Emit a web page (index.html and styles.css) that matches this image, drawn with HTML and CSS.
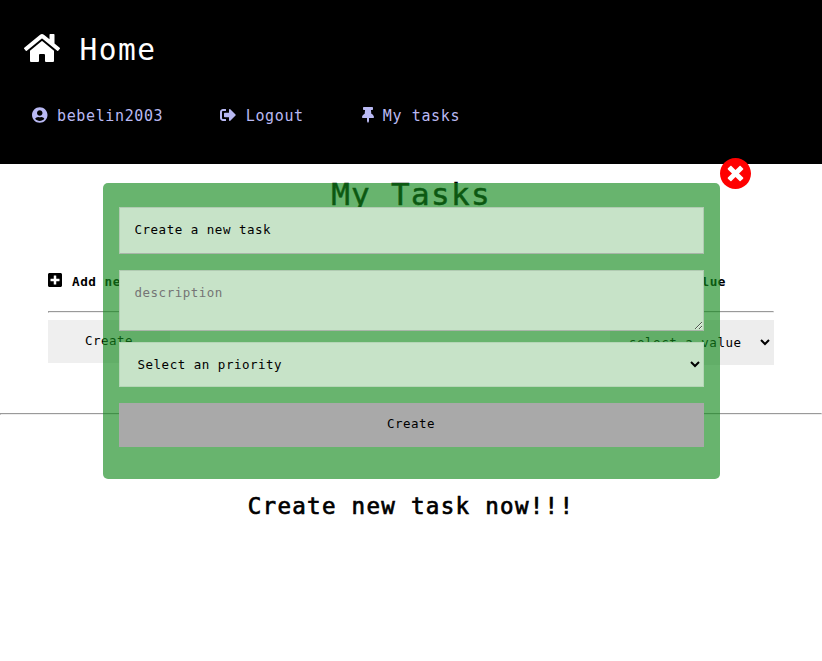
FILE: index.html
```html
<!DOCTYPE html>
<html lang="en">
<head>
<meta charset="utf-8">
<title>My Tasks</title>
<link rel="stylesheet" href="styles.css">
</head>
<body>
<header class="header">
  <a class="brand"><svg class="brand-icon" viewBox="0 0 576 512"><path d="M280.37 148.26L96 300.11V464a16 16 0 0 0 16 16l112.06-.29a16 16 0 0 0 15.92-16V368a16 16 0 0 1 16-16h64a16 16 0 0 1 16 16v95.64a16 16 0 0 0 16 16.05L464 480a16 16 0 0 0 16-16V300L295.67 148.26a12.19 12.19 0 0 0-15.3 0zM571.6 251.47L488 182.56V44.05a12 12 0 0 0-12-12h-56a12 12 0 0 0-12 12v72.61L318.47 43a48 48 0 0 0-61 0L4.34 251.47a12 12 0 0 0-1.6 16.9l25.5 31A12 12 0 0 0 45.15 301l235.22-193.74a12.19 12.19 0 0 1 15.3 0L530.9 301a12 12 0 0 0 16.9-1.6l25.5-31a12 12 0 0 0-1.7-16.93z"/></svg><span>Home</span></a>
  <nav class="nav">
    <a class="nav-link"><svg class="icon-user" viewBox="0 0 496 512"><path d="M248 8C111 8 0 119 0 256s111 248 248 248 248-111 248-248S385 8 248 8zm0 96c48.6 0 88 39.4 88 88s-39.4 88-88 88-88-39.4-88-88 39.4-88 88-88zm0 344c-58.7 0-111.3-26.6-146.5-68.2 18.8-35.4 55.6-59.8 98.5-59.8 2.4 0 4.8.4 7.1 1.1 13 4.2 26.6 6.9 40.9 6.9 14.3 0 28-2.7 40.9-6.9 2.3-.7 4.7-1.1 7.1-1.1 42.9 0 79.7 24.4 98.5 59.8C359.3 421.4 306.7 448 248 448z"/></svg><span>bebelin2003</span></a>
    <a class="nav-link"><svg class="icon-out" viewBox="0 0 512 512"><path d="M497 273L329 441c-15 15-41 4.500-41-17v-96H152c-13.300 0-24-10.700-24-24v-96c0-13.300 10.700-24 24-24h136V88c0-21.400 25.900-32 41-17l168 168c9.300 9.400 9.300 24.600 0 34zM192 436v-40c0-6.600-5.400-12-12-12H96c-17.700 0-32-14.300-32-32V160c0-17.700 14.300-32 32-32h84c6.600 0 12-5.400 12-12V76c0-6.600-5.400-12-12-12H96c-53 0-96 43-96 96v192c0 53 43 96 96 96h84c6.600 0 12-5.400 12-12z"/></svg><span>Logout</span></a>
    <a class="nav-link"><svg class="icon-pin" viewBox="0 0 384 512"><path d="M298.028 214.267L285.793 96H328c13.255 0 24-10.745 24-24V24c0-13.255-10.745-24-24-24H56C42.745 0 32 10.745 32 24v48c0 13.255 10.745 24 24 24h42.207L85.972 214.267C37.465 236.820 0 277.261 0 328c0 13.255 10.745 24 24 24h136v104.007c0 1.242.289 2.467.845 3.578l24 48c2.941 5.882 11.364 5.893 14.311 0l24-48a8.008 8.008 0 0 0 .845-3.578V352h136c13.255 0 24-10.745 24-24-.001-51.183-37.983-91.420-85.973-113.733z"/></svg><span>My tasks</span></a>
  </nav>
</header>

<main>
  <h1 class="title">My Tasks</h1>
  <section class="panel">
    <div class="panel-head">
      <span class="add"><svg class="icon-plus" viewBox="0 0 448 512"><path d="M400 32H48C21.500 32 0 53.500 0 80v352c0 26.500 21.500 48 48 48h352c26.500 0 48-21.500 48-48V80c0-26.500-21.500-48-48-48zm-32 252c0 6.600-5.400 12-12 12h-92v92c0 6.600-5.400 12-12 12h-56c-6.600 0-12-5.400-12-12v-92H92c-6.600 0-12-5.400-12-12v-56c0-6.600 5.400-12 12-12h92v-92c0-6.600 5.400-12 12-12h56c6.600 0 12 5.400 12 12v92h92c6.600 0 12 5.400 12 12v56z"/></svg>Add new</span>
      <span class="by-value">value</span>
    </div>
    <hr class="rule">
    <div class="panel-row">
      <button class="open-button">Create</button>
      <select class="value-select"><option>select a value</option></select>
    </div>
  </section>
  <hr class="rule">
  <h2 class="empty">Create new task now!!!</h2>
</main>

<div class="modal">
  <form class="form">
    <input class="field" type="text" value="Create a new task">
    <textarea class="field area" placeholder="description"></textarea>
    <select class="field priority"><option>Select an priority</option></select>
    <button class="submit" type="button">Create</button>
  </form>
  <svg class="close" viewBox="8 8 496 496"><path d="M256 8C119 8 8 119 8 256s111 248 248 248 248-111 248-248S393 8 256 8zm121.600 313.100c4.700 4.700 4.700 12.300 0 17L338 377.600c-4.700 4.700-12.300 4.700-17 0L256 312l-65.100 65.600c-4.700 4.700-12.300 4.700-17 0L134.400 338c-4.700-4.700-4.700-12.300 0-17l65.600-65-65.600-65.100c-4.700-4.700-4.700-12.300 0-17l39.600-39.600c4.700-4.700 12.300-4.700 17 0l65 65.700 65.100-65.600c4.700-4.700 12.300-4.700 17 0l39.600 39.600c4.700 4.700 4.700 12.300 0 17L312 256l65.600 65.100z"/></svg>
</div>
</body>
</html>
```
FILE: styles.css
```css
* { box-sizing: border-box; }
body {
  margin: 0;
  background: #fff;
  color: #000;
  font-family: "DejaVu Sans Mono", monospace;
}
svg { fill: currentColor; flex: none; }
button, input, textarea, select {
  font-family: inherit;
  font-size: 12.5px;
  letter-spacing: .51px;
  color: #000;
}
.header { height: 164px; background: #000; padding: 32px 24px 0; }
.brand { display: flex; gap: 19.5px; height: 32px; color: #fff; font-size: 29.5px; letter-spacing: 1.5px; line-height: 36px; }
.brand-icon { width: 36px; height: 32px; }
.nav { display: flex; gap: 57px; margin-top: 43px; padding-left: 8px; }
.nav-link { display: flex; color: #b9b9f3; font-size: 15px; letter-spacing: .63px; line-height: 19px; }
.icon-user { width: 15.5px; height: 16px; margin-right: 9.500px; }
.icon-out { width: 16px; height: 16px; margin-right: 9.500px; }
.icon-pin { width: 12px; height: 16px; margin: 0 8.500px 0 1.5px; }

.title {
  margin: 12px 0 0;
  height: 36px;
  line-height: 37px;
  text-align: center;
  font-size: 31px;
  font-weight: 400;
  letter-spacing: 1.3px;
  -webkit-text-stroke: .5px currentColor;
}
.panel { margin: 60px 48px 48px; }
.panel-head { display: flex; justify-content: space-between; height: 39px; font-size: 12.7px; letter-spacing: .5px; font-weight: 700; line-height: 20px; }
.add { display: flex; }
.icon-plus { width: 14px; height: 16px; margin-right: 10px; }
.by-value { margin-right: 48px; }
.rule { margin: 0; height: 2px; border: 1px solid #9a9a9a; border-right-color: #eee; border-bottom-color: #eee; }
.panel-row { display: flex; justify-content: space-between; align-items: flex-start; margin-top: 7px; }
.open-button { width: 122px; height: 43px; padding-bottom: 3px; border: 0; background: #efefef; }
.value-select { width: 164px; height: 45px; padding: 0 0 1px 15px; border: 0 solid #ededed; border-right-width: 1px; border-radius: 0; background-color: #ededed; }
.empty { margin: 77px 0 0; text-align: center; font-size: 22.5px; line-height: 29px; font-weight: 400; letter-spacing: 1.3px; -webkit-text-stroke: .7px currentColor; }

.modal {
  position: absolute;
  top: 182.600px;
  left: 102.500px;
  width: 617px;
  height: 296px;
  padding: 24px 16px;
  border-radius: 5px;
  background: rgba(19, 137, 28, .64);
}
.form { display: flex; flex-direction: column; }
.field { width: 100%; height: 47px; margin: 0 0 16px; padding: 0 15px 2px; border: 1px solid #b1cbb2; border-bottom-color: #a9b5a9; border-radius: 0; background-color: #c7e3c8; outline: 0; }
.area { height: 61px; padding: 14px 15px; margin-bottom: 11px; }
.area::placeholder { color: #757575; }
.priority { height: 45px; padding: 0 0 0 14px; border-color: #b5d6b7; }
.submit { height: 44px; padding-bottom: 4px; border: 0; background: #a9a9a9; }
.close { position: absolute; top: -25px; right: -31.500px; width: 31px; height: 31px; color: red; }
```
